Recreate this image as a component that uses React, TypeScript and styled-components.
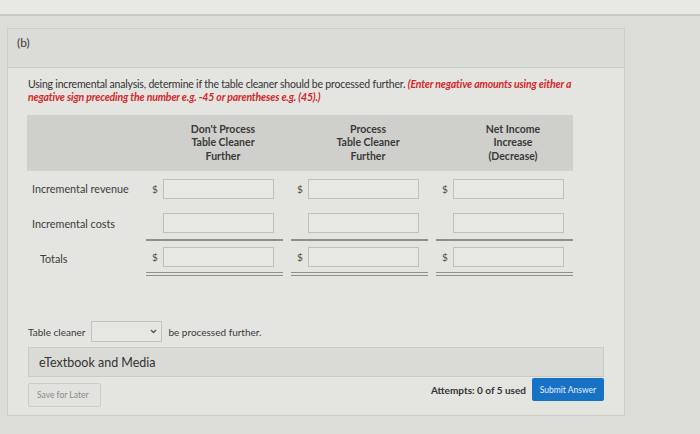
import styled, { createGlobalStyle } from "styled-components"

const GlobalStyle = createGlobalStyle`
  html, body {
    margin: 0;
    padding: 0;
    background: #d9d9d5;
    font-family: 'Lato', 'Liberation Sans', sans-serif;
  }
`

const Screen = styled.div`
  width: 700px;
  height: 434px;
  overflow: hidden;
  display: flex;
  flex-direction: column;
  background: #dcdcd8;
`
const TopBar = styled.div`
  height: 14px;
  flex-shrink: 0;
  background: #e8e8e5;
  border-bottom: 2px solid #c8c8c4;
`
const Workspace = styled.div`
  flex: 1;
  display: flex;
  padding: 12px 0 0 7px;
`
const Card = styled.div`
  width: 616px;
  height: 386px;
  background: #e4e4e0;
  border: 1px solid #cdcdc9;
  display: flex;
  flex-direction: column;
`
const CardHeader = styled.div`
  height: 39px;
  box-sizing: border-box;
  padding: 6px 0 0 9px;
  background: #dbdbd7;
  border-bottom: 1px solid #c9c9c5;
  font-size: 12px;
  color: #3c3c3c;
`
const CardBody = styled.div`
  padding: 10px 19px 0 20px;
  display: flex;
  flex-direction: column;
`
const Prompt = styled.p`
  margin: 0;
  max-width: 560px;
  font-size: 10.5px;
  line-height: 13px;
  letter-spacing: -0.2px;
  color: #333;
`
const Hint = styled.em`
  color: #d3282b;
  font-weight: 700;
  letter-spacing: -0.15px;
`

const columns = "111px 137px 137px 137px"

const Table = styled.div`
  margin-top: 11px;
  display: grid;
  grid-template-columns: ${columns};
  column-gap: 8px;
  margin-left: -1px;
`
const HeadBand = styled.div`
  grid-column: 1 / -1;
  display: grid;
  grid-template-columns: ${columns};
  column-gap: 8px;
  height: 56px;
  padding-right: 5px;
  background: #cfcfcb;
  align-items: center;
`
const HeadCell = styled.div`
  padding-left: 17px;
  text-align: center;
  font-size: 10.5px;
  font-weight: 700;
  line-height: 13.5px;
  color: #3a3a3a;
`
const RowLabel = styled.div<{ $indent?: boolean }>`
  display: flex;
  align-items: center;
  height: 35px;
  padding-left: ${(p) => (p.$indent ? "13px" : "5px")};
  font-size: 10.8px;
  color: #3c3c3c;
  white-space: nowrap;
`
const Cell = styled.div<{ $line?: "single" | "double" }>`
  display: flex;
  align-items: center;
  height: 35px;
  box-sizing: border-box;
  border-bottom: ${(p) =>
    p.$line === "single" ? "2px solid #8e8e8a" : p.$line === "double" ? "4px double #8e8e8a" : "none"};
`
const Dollar = styled.span`
  width: 17px;
  padding-left: 6px;
  box-sizing: border-box;
  font-size: 10px;
  color: #4a4a4a;
`
const Amount = styled.div`
  width: 111px;
  height: 20px;
  box-sizing: border-box;
  border: 1px solid #bfbfbb;
  background: #e7e7e3;
`

const AnswerLine = styled.div`
  margin-top: 45px;
  display: flex;
  align-items: center;
  gap: 6px;
  font-size: 10px;
  color: #3a3a3a;
`
const Select = styled.div`
  width: 71px;
  height: 21px;
  box-sizing: border-box;
  border: 1px solid #c2c2be;
  background: #e6e6e2;
  display: flex;
  align-items: center;
  justify-content: flex-end;
  padding-right: 4px;
  color: #555;
`
const MediaBar = styled.div`
  margin-top: 5px;
  width: 576px;
  height: 30px;
  box-sizing: border-box;
  padding-left: 10px;
  display: flex;
  align-items: center;
  background: #dadad6;
  border: 1px solid #cacac6;
  font-size: 12.5px;
  color: #333;
`
const Footer = styled.div`
  width: 576px;
  display: flex;
  justify-content: space-between;
  align-items: flex-start;
  margin-top: 1px;
`
const SaveButton = styled.button`
  margin-top: 5px;
  width: 73px;
  height: 24px;
  border: 1px solid #cbcbc7;
  border-radius: 2px;
  background: #e2e2de;
  font-family: inherit;
  font-size: 8.5px;
  color: #8a8a86;
  text-align: left;
  padding: 0 8px;
`
const Actions = styled.div`
  display: flex;
  align-items: center;
  gap: 6px;
`
const Attempts = styled.span`
  font-size: 10px;
  font-weight: 700;
  color: #333;
`
const SubmitButton = styled.button`
  width: 72px;
  height: 23px;
  border: none;
  border-radius: 2px;
  background: #1771c4;
  color: #e8f0fa;
  font-family: inherit;
  font-size: 8.5px;
  padding: 0;
`

const Chevron = () => (
  <svg width="7" height="5" viewBox="0 0 7 5">
    <path d="M1 1 L3.5 3.5 L6 1" fill="none" stroke="#555" strokeWidth="1.4" />
  </svg>
)

const rows = [
  { label: "Incremental revenue", dollar: true, line: undefined, indent: false },
  { label: "Incremental costs", dollar: false, line: "single" as const, indent: false },
  { label: "Totals", dollar: true, line: "double" as const, indent: true },
]

const headers = [
  ["Don't Process", "Table Cleaner", "Further"],
  ["Process", "Table Cleaner", "Further"],
  ["Net Income", "Increase", "(Decrease)"],
]

export default function App() {
  return (
    <Screen>
      <GlobalStyle />
      <TopBar />
      <Workspace>
        <Card>
          <CardHeader>(b)</CardHeader>
          <CardBody>
            <Prompt>
              Using incremental analysis, determine if the table cleaner should be processed further.{" "}
              <Hint>
                (Enter negative amounts using either a negative sign preceding the number e.g. -45 or
                parentheses e.g. (45).)
              </Hint>
            </Prompt>

            <Table>
              <HeadBand>
                <div />
                {headers.map((h) => (
                  <HeadCell key={h[0]}>
                    {h.map((line) => (
                      <div key={line}>{line}</div>
                    ))}
                  </HeadCell>
                ))}
              </HeadBand>
              {rows.flatMap((r) => [
                <RowLabel key={r.label} $indent={r.indent}>
                  {r.label}
                </RowLabel>,
                ...[0, 1, 2].map((i) => (
                  <Cell key={r.label + i} $line={r.line}>
                    <Dollar>{r.dollar ? "$" : ""}</Dollar>
                    <Amount />
                  </Cell>
                )),
              ])}
            </Table>

            <AnswerLine>
              <span>Table cleaner</span>
              <Select>
                <Chevron />
              </Select>
              <span>be processed further.</span>
            </AnswerLine>

            <MediaBar>eTextbook and Media</MediaBar>

            <Footer>
              <SaveButton>Save for Later</SaveButton>
              <Actions>
                <Attempts>Attempts: 0 of 5 used</Attempts>
                <SubmitButton>Submit Answer</SubmitButton>
              </Actions>
            </Footer>
          </CardBody>
        </Card>
      </Workspace>
    </Screen>
  )
}
